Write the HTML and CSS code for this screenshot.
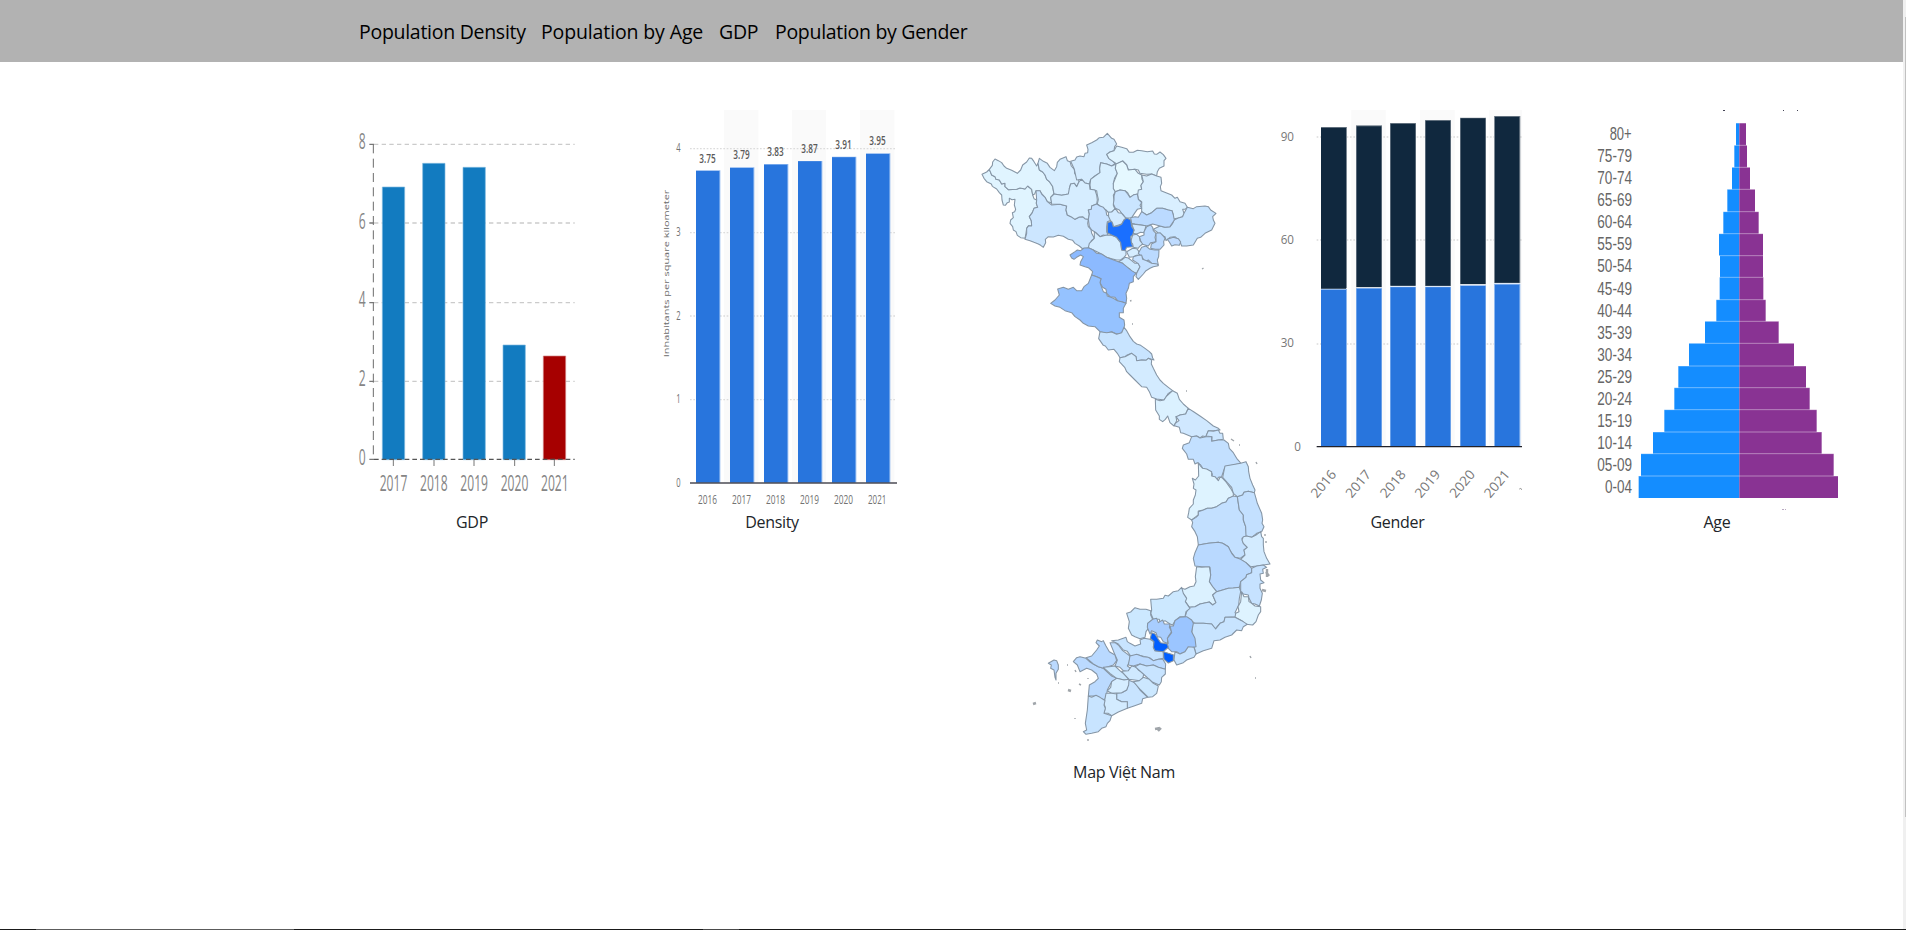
FILE: index.html
```html
<!DOCTYPE html>
<html lang="vi">
<head>
<meta charset="utf-8">
<title>Population of Việt Nam</title>
<link rel="stylesheet" href="styles.css">
</head>
<body>
<header class="topbar">
  <nav class="menu">
    <a class="menu-link density" href="#density">Population Density</a>
    <a class="menu-link age" href="#age">Population by Age</a>
    <a class="menu-link gdp" href="#gdp">GDP</a>
    <a class="menu-link gender" href="#gender">Population by Gender</a>
  </nav>
</header>
<main class="charts">
  <figure class="chart chart-gdp" id="gdp">
    <svg viewBox="36 30 720 1200" width="240" height="400">
      <g class="gdp-grid"><path d="M102 133H704M102 369H704M102 608H704M102 844H704"/></g>
      <path class="gdp-axis" stroke-dasharray="27 16" d="M100 133V1078"/>
      <path class="gdp-tick" d="M88 133H102M88 369H102M88 608H102M88 844H102M88 1078H102"/>
      <g class="gdp-bar"><path d="M127 261h67v818h-67zM248 190h67v889h-67zM369 202h67v877h-67zM489 735h67v344h-67z"/></g>
      <path class="gdp-bar-last" d="M610 768h67v311h-67z"/>
      <path class="gdp-base" d="M102 1078H704"/>
      <path class="gdp-thin" d="M160 1080v18M282 1080v18M402 1080v18M524 1080v18M643 1080v18"/>
      <g class="gdp-text" transform="scale(.567 1)">
        <text x="99" y="147">8</text>
        <text x="99" y="387">6</text>
        <text x="99" y="621">4</text>
        <text x="99" y="857">2</text>
        <text x="99" y="1096">0</text>
        <text x="209.900" y="1172">2017</text>
        <text x="423.300" y="1172">2018</text>
        <text x="636.700" y="1172">2019</text>
        <text x="850.100" y="1172">2020</text>
        <text x="1063.500" y="1172">2021</text>
      </g>
    </svg>
    <figcaption class="caption">GDP</figcaption>
  </figure>

  <figure class="chart chart-density" id="density">
    <svg viewBox="6 30 780 1200" width="260" height="400">
      <path class="stripe" d="M252 30h103v1118H252zM456 30h102v1118H456zM660 30h103v1118H660z"/>
      <path class="dots" d="M150 146H770M150 398H770M150 648H770M150 899H770"/>
      <path class="bar-edge" d="M168 211h73v937h-73zM270 202h73v946h-73zM372 192h73v956h-73zM474 183h73v965h-73zM576 170h73v978h-73zM678 160h73v988h-73z"/>
      <path class="bar-blue" d="M168 213h70v935h-70zM270 204h70v944h-70zM372 194h70v954h-70zM474 184h70v964h-70zM576 172h70v976h-70zM678 162h70v986h-70z"/>
      <path class="axis-line" d="M150 1149H771"/>
      <g class="den-value">
        <text x="178" y="188" textLength="49" lengthAdjust="spacingAndGlyphs">3.75</text>
        <text x="280" y="178" textLength="49" lengthAdjust="spacingAndGlyphs">3.79</text>
        <text x="382" y="168" textLength="49" lengthAdjust="spacingAndGlyphs">3.83</text>
        <text x="484" y="159" textLength="49" lengthAdjust="spacingAndGlyphs">3.87</text>
        <text x="586" y="146" textLength="49" lengthAdjust="spacingAndGlyphs">3.91</text>
        <text x="688" y="136" textLength="49" lengthAdjust="spacingAndGlyphs">3.95</text>
      </g>
      <g class="den-text">
        <text x="109" y="157" textLength="13" lengthAdjust="spacingAndGlyphs">4</text>
        <text x="109" y="408" textLength="13" lengthAdjust="spacingAndGlyphs">3</text>
        <text x="109" y="659" textLength="13" lengthAdjust="spacingAndGlyphs">2</text>
        <text x="109" y="909" textLength="13" lengthAdjust="spacingAndGlyphs">1</text>
        <text x="109" y="1161" textLength="13" lengthAdjust="spacingAndGlyphs">0</text>
        <text x="174" y="1211" textLength="57" lengthAdjust="spacingAndGlyphs">2016</text>
        <text x="276" y="1211" textLength="57" lengthAdjust="spacingAndGlyphs">2017</text>
        <text x="378" y="1211" textLength="57" lengthAdjust="spacingAndGlyphs">2018</text>
        <text x="480" y="1211" textLength="57" lengthAdjust="spacingAndGlyphs">2019</text>
        <text x="582" y="1211" textLength="57" lengthAdjust="spacingAndGlyphs">2020</text>
        <text x="684" y="1211" textLength="55" lengthAdjust="spacingAndGlyphs">2021</text>
      </g>
      <text class="den-side" transform="translate(88 772) rotate(-90)" textLength="503" lengthAdjust="spacingAndGlyphs">Inhabitants per square kilometer</text>
    </svg>
    <figcaption class="caption cap-density">Density</figcaption>
  </figure>

  <figure class="chart chart-map" id="map">
    <svg viewBox="974 110 300 650" width="300" height="650">
      <g class="provinces">
        <g transform="translate(960 120) scale(.33333)">
          <path fill="#e0f4ff" d="M88 148L80 156 66 163 72 175 80 185 94 192 97 199 110 207 118 218 125 225 126 240 130 255 136 256 142 248 148 246 148 235 156 239 165 238 163 255 167 268 164 275 157 278 160 293 152 300 150 310 158 320 160 330 168 335 172 346 182 353 195 355 198 340 200 325 206 317 215 318 214 302 208 290 217 278 222 265 233 262 229 250 230 240 222 236 218 225 215 208 203 198 195 207 180 204 170 208 145 209 135 200 135 190 125 192 118 180 108 178 105 170 95 165z"/>
          <path fill="#e0f4ff" d="M88 148L97 136 98 126 105 117 115 122 125 128 132 138 140 145 155 151 172 160 182 150 188 135 200 126 208 114 215 115 222 125 230 138 234 130 238 150 248 156 255 165 260 178 268 185 275 190 278 200 280 212 282 222 272 232 275 248 262 245 255 232 245 222 240 212 228 212 224 222 218 225 215 208 203 198 195 207 180 204 170 208 145 209 135 200 135 190 125 192 118 180 108 178 105 170 95 165z"/>
          <path fill="#cce6ff" d="M228 212L240 212 245 222 255 232 262 245 275 255 300 253 320 258 318 270 322 285 333 290 345 298 358 291 368 290 375 296 385 298 383 310 385 320 393 328 395 340 403 355 394 362 393 374 385 383 380 392 372 390 358 378 345 370 338 361 325 358 310 349 295 346 280 351 265 350 256 358 257 368 250 382 242 376 235 372 222 367 210 362 195 358 200 340 200 325 206 317 215 318 214 302 208 290 217 278 222 265 233 262 229 250 230 240z"/>
          <path fill="#d8eeff" d="M238 115L250 124 262 130 270 142 283 152 290 140 292 127 300 118 318 110 322 122 330 125 334 138 343 148 344 160 355 175 357 185 350 200 343 190 332 192 328 205 330 214 325 222 305 226 282 222 278 200 268 185 260 178 255 165 248 156 238 150 234 130z"/>
          <path fill="#d5ecff" d="M332 124L345 120 350 111 360 108 372 110 375 100 383 98 384 88 380 75 395 68 410 60 418 53 430 52 442 40 455 55 462 58 470 72 464 80 462 92 450 96 440 103 447 116 460 125 465 131 455 138 440 132 422 128 419 145 420 158 405 168 392 178 388 192 375 189 365 178 350 180 343 148z"/>
          <path fill="#e0f4ff" d="M470 78L485 82 500 86 508 97 520 97 532 91 545 92 562 95 578 93 583 102 590 103 600 96 610 104 618 115 612 122 612 138 598 145 592 155 590 168 575 162 560 163 540 160 535 150 525 148 505 150 500 135 488 123 470 132 460 125 447 116 440 103 450 96 462 92z"/>
          <path fill="#d8efff" d="M422 128L440 132 455 138 468 132 466 145 472 160 464 174 460 190 462 205 466 215 460 226 462 240 460 256 466 270 455 276 445 277 438 270 425 262 412 252 415 238 412 225 410 212 392 208 390 195 392 178 405 168 420 158 419 145z"/>
          <path fill="#e5f8ff" d="M488 123L500 135 505 150 525 148 535 160 545 165 546 178 550 185 543 196 545 208 535 222 522 224 510 232 503 218 495 212 480 210 466 215 460 206 460 190 466 175 472 160 466 145 468 132z"/>
          <path fill="#d9efff" d="M545 165L560 168 575 162 590 168 603 172 605 190 601 200 603 212 618 218 635 225 645 235 652 232 660 245 675 250 682 262 675 268 668 268 672 280 668 290 655 294 640 297 640 285 636 272 625 270 608 265 590 265 575 278 560 285 545 275 545 255 545 245 535 238 533 225 535 210 545 208 543 196 550 185z"/>
          <path fill="#cae5ff" d="M466 215L480 210 495 212 503 222 510 232 522 224 532 222 535 238 545 248 540 256 545 265 532 268 525 278 515 293 498 295 490 285 485 280 478 270 466 265 460 252 462 240 462 228z"/>
          <path fill="#d6edff" d="M282 222L305 226 325 222 328 205 332 192 343 190 350 200 357 185 365 178 375 189 388 192 390 208 405 210 410 225 412 240 410 252 395 258 394 268 385 270 388 282 385 298 375 296 368 290 358 291 345 298 333 290 322 285 318 270 320 258 300 253 275 252 272 232z"/>
          <path fill="#c6e1ff" d="M395 258L410 252 420 258 430 262 438 272 440 285 450 290 455 300 442 305 440 320 440 335 445 348 430 345 420 350 408 338 395 330 388 320 385 298 388 282 385 270 394 268z"/>
          <path fill="#d2eaff" d="M445 277L455 276 466 265 475 278 485 280 498 295 492 300 485 312 460 320 458 310 452 303 446 290z"/>
          <path fill="#c8e4ff" d="M682 262L700 266 710 260 735 258 745 260 752 270 768 280 758 290 760 300 765 310 755 330 735 340 722 352 712 355 700 375 680 378 665 378 660 365 645 350 630 352 618 362 615 350 600 345 590 335 580 328 600 318 615 322 630 320 638 310 642 300 655 294 668 290 672 280z"/>
          <path fill="#bbdaff" d="M545 275L560 285 575 278 590 265 608 265 625 270 636 272 640 285 643 300 630 320 615 322 600 318 578 312 560 318 545 315 525 312 515 310 512 293 525 290 535 292z"/>
          <path fill="#c0dcff" d="M622 358L640 352 655 356 662 366 658 376 645 374 635 378 628 366z"/>
          <path fill="#d0e8ff" d="M515 312L535 314 558 317 555 328 552 338 542 337 530 342 518 340 522 330z"/>
          <path fill="#bbdaff" d="M560 320L572 315 578 322 580 332 588 340 585 352 588 365 572 368 565 378 545 372 538 350 552 345 552 335z"/>
          <path fill="#bbdaff" d="M588 340L600 338 610 348 615 355 611 365 612 375 600 388 586 388 572 385 574 372 588 365z"/>
          <path fill="#d0e8ff" d="M518 345L530 343 538 350 540 362 548 372 538 380 535 385 520 382 518 372 512 365z"/>
          <path fill="#d6edff" d="M403 335L420 350 440 345 455 346 470 352 482 368 485 390 498 392 498 405 492 412 482 420 470 420 455 416 440 412 420 400 400 390 385 383 388 370 403 355z"/>
          <path fill="#cce8ff" d="M485 420L495 412 505 414 515 422 525 430 535 430 540 440 530 460 515 455 508 446 495 440 488 430 475 425z"/>
          <path fill="#d6edff" d="M500 395L518 385 530 386 535 392 540 405 530 406 520 410 508 412z"/>
          <path fill="#bbdaff" d="M545 382L558 378 570 388 585 390 597 390 596 410 592 420 595 435 575 430 565 420 555 425 545 410 535 400z"/>
          <path fill="#c6e1ff" d="M520 410L535 406 545 405 548 418 560 422 575 430 592 432 595 437 580 440 570 445 558 452 550 462 535 478 528 470 530 460 540 440 534 430 518 420z"/>
          <path fill="#8cbaff" d="M330 405L345 395 352 390 362 392 372 384 385 383 400 390 410 400 425 402 440 412 455 418 475 425 488 430 500 440 515 452 528 460 520 470 520 485 508 490 505 505 498 520 500 535 498 550 485 545 475 545 465 532 450 530 440 520 438 508 428 502 420 488 423 476 410 470 395 465 398 455 385 443 375 440 360 435 362 425 370 410 362 405 350 412 342 418 335 414z"/>
          <path fill="#95c2ff" d="M395 465L410 470 423 476 420 488 425 502 430 515 440 520 442 528 460 535 472 542 485 545 498 550 490 565 490 578 478 578 478 592 492 600 494 615 490 632 482 640 470 642 455 635 440 640 420 635 405 620 385 618 370 610 360 600 345 590 335 578 315 572 300 562 285 558 272 550 285 540 298 525 293 507 310 502 325 508 340 502 350 512 365 512 372 500 385 490z"/>
          <path fill="#1a6fff" d="M443 308L455 304 460 320 475 318 485 313 492 300 500 294 512 300 515 320 522 330 518 345 512 350 514 368 518 380 500 382 495 392 485 390 482 368 470 352 455 345 442 338z"/>
        </g>
        <g transform="translate(1040 300) scale(.33333)">
          <path fill="#c8e4ff" d="M180 95L200 98 215 96 230 103 245 98 252 82 260 92 270 110 280 124 290 132 302 136 315 145 328 155 335 162 338 174 342 180 325 175 318 181 305 180 290 182 288 170 275 160 260 166 255 170 240 173 232 160 222 148 205 150 196 138 190 136 176 116z"/>
          <path fill="#d3ebff" d="M240 173L255 170 275 160 288 170 290 182 305 180 318 181 325 175 335 180 334 192 340 205 350 225 360 240 370 250 385 262 398 272 385 280 380 288 372 300 350 297 335 292 328 275 320 262 305 260 285 240 270 225 260 215 254 202 238 185z"/>
          <path fill="#dbf1ff" d="M398 272L412 280 418 298 430 312 445 325 437 342 420 345 412 352 408 350 410 362 402 378 390 368 383 348 376 358 368 365 358 358 358 348 347 330 346 298 360 302 372 300 380 288z"/>
          <path fill="#d0e8ff" d="M445 325L462 336 480 348 500 362 520 378 535 385 540 390 520 392 505 392 498 410 488 408 480 414 470 408 455 410 430 400 422 398 418 382 403 377 406 370 417 362 408 350 420 345 437 342z"/>
          <path fill="#cce6ff" d="M505 392L520 394 535 390 540 400 548 400 550 418 535 420 515 424 516 410 498 408z"/>
          <path fill="#c3e0ff" d="M455 410L470 408 480 414 498 410 515 410 515 424 535 420 552 420 565 430 568 445 580 458 590 475 603 490 580 495 555 500 550 515 545 530 535 532 530 542 515 536 517 522 512 515 490 508 482 495 472 488 465 492 460 478 445 478 440 462 427 445 430 435 448 428z"/>
        </g>
        <g transform="translate(1120 430) scale(.33333)">
          <path fill="#cae6ff" d="M315 108L345 103 362 100 378 95 385 110 386 125 390 145 398 165 405 180 403 188 385 184 372 187 368 195 352 200 340 190 335 172 322 158 308 142z"/>
          <path fill="#def3ff" d="M235 98L240 106 248 115 260 117 275 125 275 138 285 140 295 152 300 142 306 143 318 156 332 175 340 190 340 200 325 205 318 216 305 220 290 230 275 235 262 235 250 240 235 243 235 255 225 262 215 270 203 262 206 248 208 235 220 222 220 210 226 195 228 180 220 175 222 162 217 145 226 150 236 138z"/>
          <path fill="#c3e0ff" d="M352 200L355 220 358 240 370 255 370 270 377 290 380 318 366 325 370 340 382 352 372 360 375 375 360 385 345 382 330 362 325 350 308 340 295 337 265 340 235 345 232 320 225 305 215 290 218 278 215 270 228 262 235 255 235 245 250 240 262 235 275 235 290 230 305 220 318 216 325 205 340 198z"/>
          <path fill="#c3e0ff" d="M352 200L368 195 372 187 385 184 403 188 408 205 412 220 425 250 428 270 426 280 432 290 425 305 410 310 395 322 378 318 377 290 370 270 370 255 358 240 355 220z"/>
          <path fill="#d3ebff" d="M370 320L380 318 395 322 408 315 422 305 425 320 430 325 430 345 432 365 440 385 450 402 430 405 410 408 392 410 378 398 362 388 375 375 372 360 382 352 370 340 366 330z"/>
          <path fill="#b9d9ff" d="M235 345L265 340 295 337 308 340 325 350 335 370 345 382 362 388 378 398 395 415 395 428 380 434 378 442 362 455 358 472 340 474 325 475 308 480 290 485 275 470 268 455 272 435 270 412 245 410 225 408 220 385 225 368z"/>
          <path fill="#c6e2ff" d="M395 415L410 408 430 405 440 412 428 418 430 430 420 432 422 450 432 458 420 462 420 475 427 490 424 510 418 528 405 522 395 520 387 505 385 495 370 492 362 485 362 455 378 442 380 434 395 428z"/>
          <path fill="#dbf1ff" d="M230 410L245 412 268 410 272 435 268 455 278 470 290 485 278 495 288 518 278 525 268 516 240 522 225 530 208 532 196 515 198 502 188 490 185 475 195 478 210 470 222 468 228 455 226 440z"/>
          <path fill="#c8e4ff" d="M290 485L308 480 325 475 340 474 358 472 362 485 358 505 356 525 345 548 355 560 315 562 312 575 300 580 285 597 275 582 250 580 225 580 205 565 195 562 200 545 208 532 225 530 240 522 268 516 278 525 288 518 278 495z"/>
          <path fill="#def3ff" d="M365 485L372 500 385 500 387 515 395 520 405 528 422 530 422 545 415 555 408 575 398 585 378 583 365 572 345 562 347 550 357 545 354 530 362 515z"/>
          <path fill="#c8e4ff" d="M218 580L250 580 275 582 287 597 300 580 312 575 315 562 345 562 365 572 382 583 370 590 365 602 350 600 335 615 315 622 300 630 282 632 275 655 250 662 228 672 222 650 222 625 215 610z"/>
          <path fill="#cce8ff" d="M92 508L110 508 130 505 135 496 145 498 160 485 175 482 185 472 190 490 200 505 196 515 210 535 198 545 195 560 180 560 165 572 158 585 150 582 135 572 120 578 118 568 100 568 92 550 95 540z"/>
          <path fill="#cce8ff" d="M20 550L32 546 45 533 60 538 78 538 92 542 92 555 98 568 83 580 85 595 78 605 75 622 60 626 45 620 35 615 25 595 28 575z"/>
          <path fill="#a8cdff" d="M98 568L110 565 115 578 128 570 133 582 150 582 148 592 155 605 145 620 142 640 130 635 122 622 112 620 108 608 95 602 90 612 82 592 83 580z"/>
          <path fill="#9bc5ff" d="M150 588L160 588 165 572 180 562 200 560 215 570 220 580 215 605 225 625 228 650 205 655 195 665 180 672 170 665 155 665 145 655 135 645 145 640 142 625 155 608z"/>
          <path fill="#c8e4ff" d="M165 665L180 672 195 665 205 650 222 652 228 672 222 682 200 690 190 698 170 705 162 690z"/>
        </g>
        <g transform="translate(1020 590) scale(.33333)">
          <path fill="#c8e4ff" d="M275 152L295 150 318 142 322 155 330 160 345 168 362 162 360 150 372 145 390 148 402 155 400 172 405 182 430 185 430 205 415 208 400 212 390 204 375 200 355 195 332 198 322 184 310 180 295 162z"/>
          <path fill="#c3e0ff" d="M270 158L285 158 295 165 308 182 330 198 328 215 322 228 332 235 325 245 310 242 300 232 285 228 292 210 285 195z"/>
          <path fill="#bbdaff" d="M330 198L350 193 370 200 385 202 400 212 415 208 428 207 437 222 436 238 415 232 400 225 380 228 360 222 340 228 325 225z"/>
          <path fill="#bbdaff" d="M160 215L170 203 180 200 198 205 210 216 220 222 235 230 250 235 262 246 275 258 290 265 275 275 262 300 260 315 254 330 235 322 228 318 205 318 208 285 225 275 235 265 230 252 215 240 200 235 180 245 172 225z"/>
          <path fill="#b9d9ff" d="M232 150L245 155 250 152 258 168 268 185 285 195 290 212 280 225 250 235 235 230 220 222 198 203 215 198 230 180 238 168 228 158z"/>
          <path fill="#cce8ff" d="M250 232L268 230 285 228 302 244 310 250 327 268 312 270 290 265 270 250z"/>
          <path fill="#cfe9ff" d="M305 244L325 242 335 228 350 232 355 240 372 250 368 265 360 272 327 268 315 255z"/>
          <path fill="#c8e4ff" d="M345 230L360 222 380 228 400 225 415 232 436 238 436 252 425 262 424 275 418 285 395 275 370 252z"/>
          <path fill="#c8e4ff" d="M325 270L345 278 360 300 383 322 368 326 365 340 342 348 322 355 322 335 305 335 290 328 290 310 305 308 320 300z"/>
          <path fill="#cce8ff" d="M340 275L358 272 370 262 388 268 400 280 415 288 412 302 410 310 398 320 385 322 362 300z"/>
          <path fill="#d6edff" d="M262 303L272 292 275 275 290 265 312 270 327 268 326 285 320 300 305 308 275 310z"/>
          <path fill="#d3ebff" d="M258 310L275 310 290 312 290 328 305 335 322 335 322 355 295 366 275 377 265 370 252 370 256 352 252 342z"/>
          <path fill="#c8e4ff" d="M205 318L215 322 228 316 240 322 255 332 252 345 256 355 252 370 275 377 270 392 262 400 258 410 245 415 235 425 215 430 198 433 190 425 200 420 196 400 202 360z"/>
          <path fill="#bbdaff" d="M85 220L102 210 110 212 115 225 115 238 108 250 108 270 105 262 102 240 92 235 94 225z"/>
          <path fill="#005eff" d="M395 128L405 132 415 148 422 158 442 162 445 172 430 185 445 190 460 194 460 212 445 219 432 208 430 185 405 182 400 172 402 155 391 145z"/>
        </g>
      </g>
      <g class="islets">
        <path d="M1202 269l1.500-.800M1130 301l1.500-.500M1132 324h1M1186 391h1M1231 439l3 2M1239 445h1M1256 462l1 2M1265 534v2M1266 541v2"/>
        <path class="islet-big" d="M1266 572l3 4M1262 590l4 1M1267 569v8M1155 729l5-1M1158 731l3-3M1068 690l3 1M1033 704l3-1"/>
        <path d="M1250 656l1 2M1255 678h1M1075 670l1 2M1079 684l2 1M1088 739v2M1075 718v1M1058 683h1M1067 665h1M1088 678v1"/>
      </g>
    </svg>
    <figcaption class="caption cap-map">Map Việt Nam</figcaption>
  </figure>

  <figure class="chart chart-gender" id="gender">
    <svg viewBox="39 30 747 1200" width="249" height="400">
      <path class="stripe" d="M274 30h103v1008H274zM480 30h104v1008H480zM688 30h98v1008h-98z"/>
      <path class="dots" d="M170 111H786M170 420H786M170 732H786"/>
      <path class="dark-edge" d="M183 81h78v484h-78zM288 76h78v486h-78zM390 69h78v488h-78zM495 60h78v498h-78zM600 53h78v500h-78zM702 48h79v501h-79z"/>
      <path class="bar-dark" d="M183 83h75v483h-75zM290 79h74v482h-74zM392 71h74v486h-74zM497 62h74v495h-74zM602 55h74v497h-74zM705 50h73v498h-73z"/>
      <path class="bar-edge" d="M183 567h78v472h-78zM288 564h78v475h-78zM390 560h78v479h-78zM495 560h78v479h-78zM600 556h78v483h-78zM702 551h79v488h-79z"/>
      <path class="bar-blue" d="M183 570h75v469h-75zM290 566h74v473h-74zM392 562h74v477h-74zM497 562h74v477h-74zM602 558h74v481h-74zM705 554h73v485h-73z"/>
      <path class="axis-line dark" d="M170 1040H786"/>
      <g class="gen-text">
        <text x="62" y="122" textLength="40" lengthAdjust="spacingAndGlyphs">90</text>
        <text x="62" y="433" textLength="40" lengthAdjust="spacingAndGlyphs">60</text>
        <text x="62" y="742" textLength="40" lengthAdjust="spacingAndGlyphs">30</text>
        <text x="103" y="1054" textLength="20" lengthAdjust="spacingAndGlyphs">0</text>
        <text transform="translate(171 1196) rotate(-50)" textLength="94" lengthAdjust="spacingAndGlyphs">2016</text>
        <text transform="translate(275 1196) rotate(-50)" textLength="94" lengthAdjust="spacingAndGlyphs">2017</text>
        <text transform="translate(379 1196) rotate(-50)" textLength="94" lengthAdjust="spacingAndGlyphs">2018</text>
        <text transform="translate(483 1196) rotate(-50)" textLength="94" lengthAdjust="spacingAndGlyphs">2019</text>
        <text transform="translate(587 1196) rotate(-50)" textLength="94" lengthAdjust="spacingAndGlyphs">2020</text>
        <text transform="translate(691 1196) rotate(-50)" textLength="94" lengthAdjust="spacingAndGlyphs">2021</text>
      </g>
      <path class="cut-mark" d="M778 1167q4-4 8 2"/>
    </svg>
    <figcaption class="caption cap-gender">Gender</figcaption>
  </figure>

  <figure class="chart chart-age" id="age">
    <svg viewBox="21 30 780 1200" width="260" height="400">
      <path class="male" d="M478 70H468V136H463V202H456V268H442V335H430V401H417V467H420V532H419V599H409V664H375V730H327V798H295V863H283V929H253V996H219V1061H183V1128H176V1194H478z"/>
      <path class="female" d="M478 70H498V136H501V202H510V268H525V335H536V401H549V467H549V532H550V599H557V664H596V730H642V798H678V863H689V929H710V996H725V1061H761V1128H774V1194H478z"/>
      <path class="age-rule" d="M463 136H501M456 202H510M442 268H525M430 335H536M417 401H549M417 467H549M419 532H550M409 599H557M375 664H596M327 730H642M295 798H678M283 863H689M253 929H710M219 996H725M183 1061H761M176 1128H774"/>
      <g class="age-text">
        <text x="89" y="121" textLength="66" lengthAdjust="spacingAndGlyphs">80+</text>
        <text x="52" y="187" textLength="104" lengthAdjust="spacingAndGlyphs">75-79</text>
        <text x="52" y="253" textLength="104" lengthAdjust="spacingAndGlyphs">70-74</text>
        <text x="52" y="319" textLength="104" lengthAdjust="spacingAndGlyphs">65-69</text>
        <text x="52" y="385" textLength="104" lengthAdjust="spacingAndGlyphs">60-64</text>
        <text x="52" y="451" textLength="104" lengthAdjust="spacingAndGlyphs">55-59</text>
        <text x="52" y="517" textLength="104" lengthAdjust="spacingAndGlyphs">50-54</text>
        <text x="52" y="584" textLength="104" lengthAdjust="spacingAndGlyphs">45-49</text>
        <text x="52" y="650" textLength="104" lengthAdjust="spacingAndGlyphs">40-44</text>
        <text x="52" y="716" textLength="104" lengthAdjust="spacingAndGlyphs">35-39</text>
        <text x="52" y="782" textLength="104" lengthAdjust="spacingAndGlyphs">30-34</text>
        <text x="52" y="849" textLength="104" lengthAdjust="spacingAndGlyphs">25-29</text>
        <text x="52" y="914" textLength="104" lengthAdjust="spacingAndGlyphs">20-24</text>
        <text x="52" y="980" textLength="104" lengthAdjust="spacingAndGlyphs">15-19</text>
        <text x="52" y="1047" textLength="104" lengthAdjust="spacingAndGlyphs">10-14</text>
        <text x="52" y="1112" textLength="104" lengthAdjust="spacingAndGlyphs">05-09</text>
        <text x="75" y="1179" textLength="81" lengthAdjust="spacingAndGlyphs">0-04</text>
      </g>
      <path class="specks" d="M429 31.500h6M609 31.500h3M651 31.500h3"/>
      <path class="specks faint" d="M606 1228.500h6M615 1228.500h3"/>
    </svg>
    <figcaption class="caption">Age</figcaption>
  </figure>
</main>
<div class="scroll-track"><div class="scroll-thumb"></div></div>
<div class="bottom-strip"></div>
</body>
</html>
```
FILE: styles.css
```css
* { box-sizing: border-box; }
body {
  margin: 0;
  height: 930px;
  overflow: hidden;
  background: #fff;
  color: #212529;
  font-family: "Open Sans", "Noto Sans", sans-serif;
  font-size: 16px;
  line-height: 24px;
}
.topbar {
  height: 62px;
  padding-left: 359px;
  background: #b2b2b2;
  display: flex;
  align-items: center;
}
.menu { display: flex; padding-top: 1px; }
.menu-link {
  color: #000;
  font-size: 19.5px;
  line-height: 30px;
  text-decoration: none;
  white-space: nowrap;
}
.menu-link.density { width: 182px; letter-spacing: -0.28px; }
.menu-link.age { width: 178px; letter-spacing: -0.13px; }
.menu-link.gdp { width: 56px; letter-spacing: -0.3px; }
.menu-link.gender { letter-spacing: -0.3px; }

.charts { display: flex; align-items: flex-start; padding: 48px 0 0 352px; }
.chart { margin: 0; flex: none; display: flex; flex-direction: column; align-items: center; }
.chart svg { display: block; }
.chart-density { margin-left: 50px; }
.chart-map { margin-left: 72px; }
.chart-gender { margin-left: -1px; }
.chart-age { margin-left: 65px; }
.caption { font-size: 16px; letter-spacing: -0.3px; white-space: nowrap; }

.gdp-grid path { stroke: #cbcbcb; stroke-width: 4; stroke-dasharray: 13 10; }
.gdp-axis { stroke: #6b6b6b; stroke-width: 3; }
.gdp-tick { stroke: #777; stroke-width: 4; }
.gdp-bar path { fill: #127bc0; stroke: #80b9df; stroke-width: 2; }
.gdp-bar-last { fill: #a60000; stroke: #d28080; stroke-width: 2; }
.gdp-base { stroke: #555; stroke-width: 4; stroke-dasharray: 14 9; }
.gdp-thin { stroke: #777; stroke-width: 3; }
.gdp-text { font-size: 64px; fill: #858585; }

.stripe { fill: #fafafa; }
.dots { stroke: #dcdcdc; stroke-width: 4; stroke-dasharray: 5 5; }
.bar-edge { fill: #8db7ef; }
.bar-blue { fill: #2875dd; }
.dark-edge { fill: #7b8793; }
.bar-dark { fill: #10283e; }
.axis-line { stroke: #4b4b55; stroke-width: 5; }
.axis-line.dark { stroke: #22222a; stroke-width: 4; }
.den-value { font-size: 38px; font-weight: 600; fill: #5a5a5a; }
.den-text { font-size: 36px; fill: #727272; }
.den-side { font-size: 22px; fill: #6a6a6a; }
.gen-text { font-size: 40px; fill: #777; }
.cut-mark { fill: none; stroke: #888; stroke-width: 3; }

.provinces path { stroke: #8595a5; stroke-width: 3.2; stroke-linejoin: round; }
.islets path { fill: none; stroke: #a0a5aa; stroke-width: 1.4; }
.islets .islet-big { stroke-width: 2.4; }

.male { fill: #148dff; }
.female { fill: #893393; }
.age-rule { stroke: #fff; stroke-opacity: .4; stroke-width: 3; }
.age-text { font-family: "Liberation Sans", Arial, sans-serif; font-size: 56px; fill: #666; }
.specks { stroke: #445; stroke-width: 3; }
.specks.faint { stroke: #b9a9c0; }

.scroll-track {
  position: fixed; top: 0; right: 0;
  width: 3px; height: 929px;
  padding-top: 17px;
  background: #f0f0f0;
}
.scroll-thumb { margin-left: 2px; height: 800px; background: #c1c1c1; }
.bottom-strip {
  position: fixed; left: 0; bottom: 0;
  width: 100%; height: 1px;
  background: linear-gradient(90deg, #1a1a1a 36px, #5c5c5c 36px, #5c5c5c 294px, #1a1a1a 294px, #1a1a1a 703px, #4a4a4a 703px, #4a4a4a 739px, #1a1a1a 739px);
}
```
